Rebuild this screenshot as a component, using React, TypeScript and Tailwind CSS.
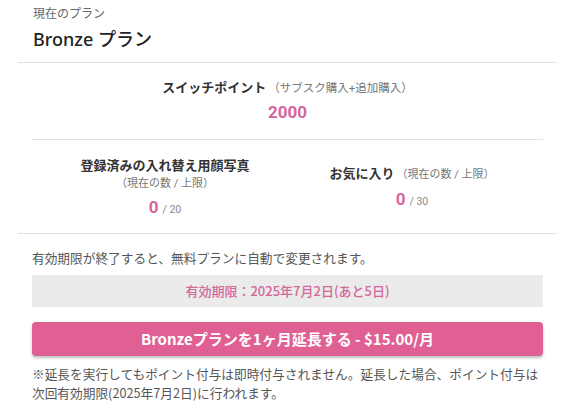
export default function App() {
  return (
    <div className="min-h-[418px] w-[587px] bg-white font-['Noto_Sans','Noto_Sans_CJK_JP',sans-serif]">
      <div className="ml-[18px] w-[539px]">
        <div className="px-[15px] pt-[6px] pb-[11px]">
          <p className="text-[12px] leading-[16px] text-[#666]">現在のプラン</p>
          <h1 className="mt-[5px] text-[18px] leading-[24px] font-medium text-[#222]">Bronze プラン</h1>
        </div>

        <div className="border-t border-[#e2e2e2] px-[14px]">
          <div className="pt-[15px] pb-[16px] text-center font-['Roboto','Noto_Sans_CJK_JP',sans-serif]">
            <p className="text-[13px] leading-[20px] font-bold text-[#333]">
              スイッチポイント
              <span className="ml-[2px] text-[11.5px] font-normal text-[#777]">（サブスク購入+追加購入）</span>
            </p>
            <p className="mt-[3px] text-[17px] leading-[22px] font-bold text-[#d4679a]">2000</p>
          </div>

          <div className="flex items-center justify-center gap-[80px] border-t border-[#e2e2e2] pt-[16px] pb-[11px] font-['Roboto','Noto_Sans_CJK_JP',sans-serif]">
            <div className="text-center">
              <p className="text-[13px] leading-[19px] font-bold text-[#333]">登録済みの入れ替え用顔写真</p>
              <p className="mt-[-1px] text-[11px] leading-[19px] text-[#777]">（現在の数 / 上限）</p>
              <p className="mt-[2px] leading-[24px]">
                <span className="text-[17px] font-bold text-[#d4679a]">0</span>
                <span className="ml-[4px] text-[10.5px] text-[#888]">/ 20</span>
              </p>
            </div>
            <div className="text-center">
              <p className="text-[13px] leading-[19px] font-bold text-[#333]">
                お気に入り
                <span className="ml-[2px] text-[11px] font-normal text-[#777]">（現在の数 / 上限）</span>
              </p>
              <p className="mt-[3px] leading-[24px]">
                <span className="text-[17px] font-bold text-[#d4679a]">0</span>
                <span className="ml-[4px] text-[10.5px] text-[#888]">/ 30</span>
              </p>
            </div>
          </div>
        </div>

        <div className="border-t border-[#e2e2e2] px-[14px] pt-[14px] font-['Noto_Sans_CJK_JP',sans-serif]">
          <p className="text-[12.7px] leading-[20px] text-[#555]">有効期限が終了すると、無料プランに自動で変更されます。</p>
          <div className="mt-[7px] flex h-[32px] items-center justify-center bg-[#ebebeb] text-[13px] font-medium text-[#d4679a]">
            有効期限：2025年7月2日(あと5日)
          </div>
          <button
            type="button"
            className="mt-[15px] flex h-[34px] w-full items-center justify-center rounded-[4px] bg-[#e06093] text-[15px] font-bold text-white shadow-[0_2px_3px_rgba(0,0,0,0.25)]"
          >
            Bronzeプランを1ヶ月延長する - $15.00/月
          </button>
          <p className="mt-[8px] text-[12.7px] leading-[19px] text-[#555]">
            ※延長を実行してもポイント付与は即時付与されません。延長した場合、ポイント付与は次回有効期限(2025年7月2日)に行われます。
          </p>
        </div>
      </div>
    </div>
  );
}
